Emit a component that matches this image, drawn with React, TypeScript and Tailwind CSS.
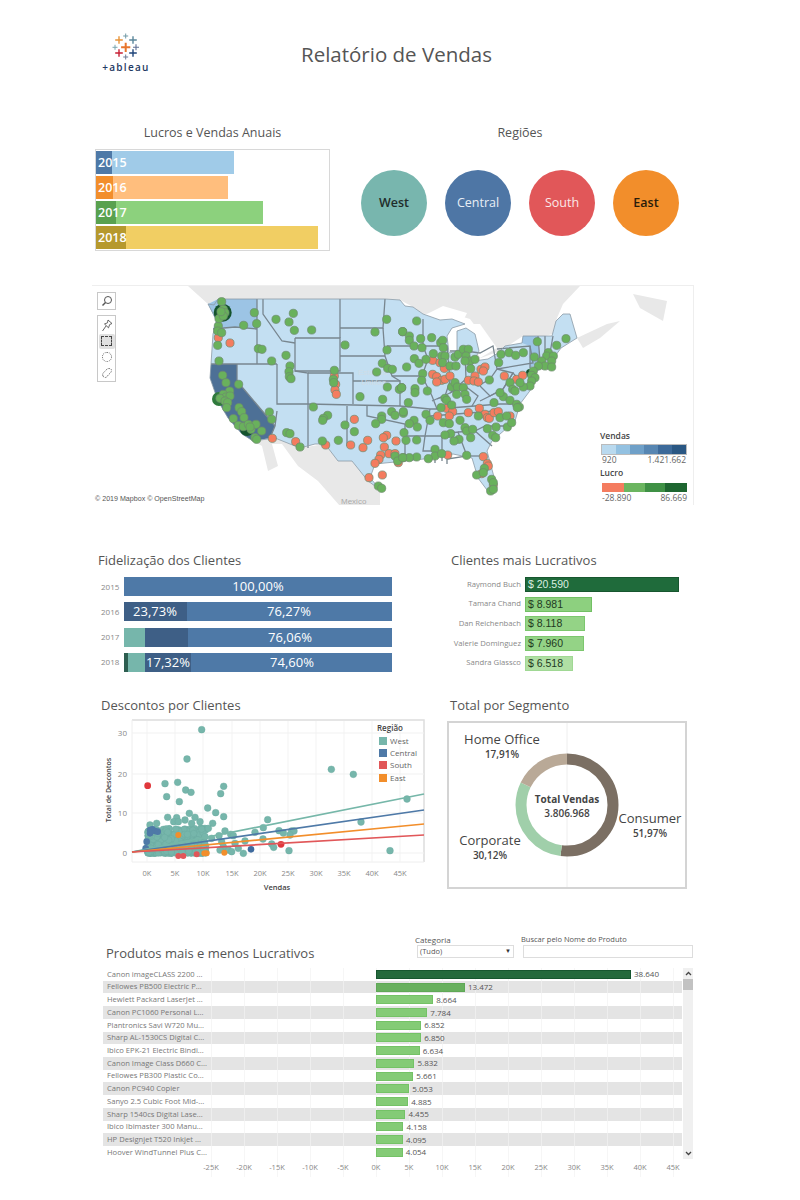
const years = [
  { y: "2015", w: 138, d: 16, bg: "bg-[#a0cbe8]", dark: "bg-[#4e79a7]" },
  { y: "2016", w: 132, d: 17, bg: "bg-[#ffbe7d]", dark: "bg-[#f28e2b]" },
  { y: "2017", w: 167, d: 20, bg: "bg-[#8cd17d]", dark: "bg-[#59a14f]" },
  { y: "2018", w: 222, d: 30, bg: "bg-[#f1ce63]", dark: "bg-[#b6992d]" },
];

const regions = [
  { name: "West", bg: "bg-[#78b6ae]", text: "font-semibold text-[#1f2d2b]" },
  { name: "Central", bg: "bg-[#4e76a5]", text: "font-medium text-[#e8eef5]" },
  { name: "South", bg: "bg-[#e15759]", text: "font-medium text-[#fbe9e9]" },
  { name: "East", bg: "bg-[#f28e2b]", text: "font-semibold text-[#2b1c0a]" },
];

const customers = [
  { name: "Raymond Buch", v: "$ 20.590", w: 154, bg: "bg-[#1f6b3b] border-[#17562f]", text: "text-[#dcefe0]" },
  { name: "Tamara Chand", v: "$ 8.981", w: 67, bg: "bg-[#8dd07f] border-[#72c064]", text: "text-[#1f3a1f]" },
  { name: "Dan Reichenbach", v: "$ 8.118", w: 60, bg: "bg-[#94d386] border-[#7cc76e]", text: "text-[#1f3a1f]" },
  { name: "Valerie Dominguez", v: "$ 7.960", w: 59, bg: "bg-[#94d386] border-[#7cc76e]", text: "text-[#1f3a1f]" },
  { name: "Sandra Glassco", v: "$ 6.518", w: 48, bg: "bg-[#b0dfa4] border-[#a0d894]", text: "text-[#1f3a1f]" },
];

const products = [
  ["Canon imageCLASS 2200 ...", 38640, "38.640"],
  ["Fellowes PB500 Electric P...", 13472, "13.472"],
  ["Hewlett Packard LaserJet ...", 8664, "8.664"],
  ["Canon PC1060 Personal L...", 7784, "7.784"],
  ["Plantronics Savi W720 Mu...", 6852, "6.852"],
  ["Sharp AL-1530CS Digital C...", 6850, "6.850"],
  ["Ibico EPK-21 Electric Bindi...", 6634, "6.634"],
  ["Canon Image Class D660 C...", 5832, "5.832"],
  ["Fellowes PB300 Plastic Co...", 5661, "5.661"],
  ["Canon PC940 Copier", 5053, "5.053"],
  ["Sanyo 2.5 Cubic Foot Mid-...", 4885, "4.885"],
  ["Sharp 1540cs Digital Lase...", 4455, "4.455"],
  ["Ibico Ibimaster 300 Manu...", 4158, "4.158"],
  ["HP Designjet T520 Inkjet ...", 4095, "4.095"],
  ["Hoover WindTunnel Plus C...", 4054, "4.054"],
] as [string, number, string][];

// dots read off the map, in 3x crop coordinates
const greenW = [[410,62],[508,95],[573,115],[625,97],[612,123],[628,148],[680,147],[476,133],[515,128],[400,135],[398,150],[410,155],[398,193],[520,203],[531,205],[603,223],[560,240],[402,240],[413,283],[423,305],[461,310],[615,255],[612,272],[613,287],[618,293],[780,192],[905,115],[870,153],[953,152],[906,207],[892,247],[875,273],[908,262],[922,265],[907,318],[943,325],[950,320],[825,347],[893,355],[748,268],[745,295],[746,305],[685,378],[728,403],[715,412],[713,418],[780,432],[808,452],[890,405],[890,415],[872,428],[920,392],[930,403],[955,397],[605,455],[615,458],[645,498],[712,480],[760,478],[930,525],[938,540],[955,530],[880,615],[890,622],[434,330],[415,340],[423,348],[435,345],[405,352],[420,360],[428,365],[425,380],[462,380],[470,392],[477,410],[445,413],[460,433],[475,437],[490,430],[498,445],[513,430],[530,450],[495,438],[510,470],[515,475],[553,393],[560,415],[415,85],[420,95],[402,113],[415,105],[408,92]];
const redW = [[400,170],[435,186],[748,285],[752,310],[750,327],[754,340],[808,415],[562,472],[632,482],[722,492],[797,492],[848,478],[834,500],[905,463],[895,470],[933,480],[898,498],[912,518],[887,522],[882,535],[870,547],[930,518],[940,545],[852,590],[892,582]];
const greenE = [[50,120],[8,152],[28,165],[28,178],[62,173],[42,195],[66,200],[95,170],[122,185],[128,178],[100,218],[130,200],[125,225],[135,225],[165,228],[175,220],[190,205],[205,205],[198,225],[210,240],[195,240],[225,235],[43,233],[57,247],[78,235],[20,258],[68,278],[65,298],[128,245],[150,255],[168,255],[212,263],[296,245],[303,220],[327,215],[347,223],[370,215],[412,182],[403,228],[470,193],[498,173],[445,215],[440,225],[460,225],[455,240],[425,240],[435,255],[415,255],[400,270],[455,258],[395,283],[405,290],[395,300],[390,315],[370,318],[360,305],[330,305],[338,325],[345,330],[310,347],[300,335],[330,358],[350,370],[358,378],[352,380],[268,297],[155,318],[165,305],[172,318],[190,320],[195,340],[170,340],[200,355],[135,352],[140,358],[123,380],[155,372],[45,323],[45,335],[82,330],[25,365],[5,320],[10,392],[78,400],[90,418],[42,418],[28,428],[52,438],[130,425],[148,428],[180,418],[195,440],[200,450],[218,445],[262,443],[288,438],[300,410],[320,405],[322,438],[335,425],[282,365],[235,405],[152,458],[135,462],[12,455],[18,478],[50,477],[177,475],[162,480],[212,470],[278,463],[287,470],[105,505],[105,525],[125,518],[85,533],[50,528],[28,530],[8,530],[200,523],[230,582],[253,562],[250,575],[275,595],[280,605],[272,630],[280,625]];
const redE = [[98,238],[120,245],[133,262],[98,280],[110,287],[125,298],[135,295],[110,303],[150,285],[205,298],[225,285],[222,300],[235,303],[243,265],[255,258],[250,270],[313,285],[350,295],[368,283],[140,382],[158,392],[148,405],[113,405],[205,395],[238,382],[255,400],[262,410],[268,412],[282,395],[295,392],[330,405],[143,522],[250,527],[262,548],[265,555],[245,578],[280,612]];

const usOutline = "208,303 214,304 218,298 257,298 340,298 385,298 400,299 405,305 413,306 423,313 440,319 452,318 465,323 452,327 447,335 449,352 457,350 457,330 466,327 475,333 479,350 474,360 488,358 498,352 505,345 522,342 523,335 538,335 552,335 556,320 563,313 570,313 577,337 561,347 553,358 553,367 540,368 530,375 532,387 520,403 515,420 492,440 487,450 497,487 490,493 478,477 472,457 453,453 433,457 405,460 375,463 370,477 382,490 368,480 352,460 338,460 325,443 315,443 300,447 275,437 253,440 242,433 228,417 218,400 210,377 211,363 213,333 217,320";
const stateLines = [
  "213,328 235,326 257,328", "257,298 257,363", "211,363 277,363", "263,298 263,313 282,340 295,342",
  "295,337 340,337 340,370 295,370 295,337", "277,363 277,403 308,403", "295,370 308,372 308,403", "308,372 353,372 353,403",
  "237,363 237,380 275,425", "277,410 275,425 270,437", "308,403 308,447", "308,403 400,405", "347,405 347,445",
  "340,298 340,337", "340,327 383,327 385,298", "340,355 385,355", "353,380 400,380 400,405", "383,327 385,355 392,375 400,380",
  "367,405 367,415 405,423 405,435 405,460", "387,345 423,345 428,358 422,375 392,375", "422,375 432,395 437,408 430,408 400,405",
  "430,408 425,435 405,435", "425,435 423,450 435,450 435,462", "425,435 442,435 442,460", "442,433 458,431 467,455 447,458 447,463",
  "458,431 475,430 492,445", "467,455 487,455", "475,430 485,425 505,425", "430,415 495,410", "437,408 500,403 520,403",
  "432,400 450,392 465,385 478,395 472,405", "423,345 423,318", "423,345 447,345 450,380 445,395 437,398", "450,350 465,350 466,378 450,392",
  "465,350 480,352 493,345 497,368 490,378 478,385 466,378", "497,348 530,345 533,362 497,368", "497,368 505,370 513,372 503,388 490,395 480,385",
  "480,400 490,395 503,388 513,372 525,385", "530,345 530,367", "538,335 540,360", "545,335 545,352 553,352", "553,335 550,352",
];

function Crosses() {
  const marks = [
    [125.7, 48.3, 4.6, 2, "#e8762c"], [119, 41, 3.8, 1.4, "#e8943a"], [133, 41, 3.8, 1.4, "#5b879b"], [125.7, 37, 2.5, 1, "#7199a6"],
    [115, 48.3, 2.5, 1, "#7ba6b0"], [136, 48.3, 3, 1.1, "#5f6f94"], [119, 54, 3.8, 1.4, "#c72035"], [133, 54, 3.8, 1.4, "#1f447a"], [125.7, 58, 2.5, 1, "#6e7b96"],
  ] as [number, number, number, number, string][];
  return (
    <svg width="44" height="30" viewBox="104 33 44 30">
      {marks.map(([x, y, r, t, c], i) => (
        <path key={i} d={`M${x - r} ${y}H${x + r}M${x} ${y - r}V${y + r}`} stroke={c} strokeWidth={t} />
      ))}
    </svg>
  );
}

function Toolbar() {
  return (
    <div className="absolute left-[5px] top-[6px] flex flex-col gap-[5px]">
      <div className="flex h-[18px] w-[19px] items-center justify-center border border-[#c8c8c8] bg-white">
        <svg width="12" height="12" viewBox="0 0 12 12" fill="none" stroke="#555" strokeWidth="1">
          <circle cx="7" cy="5" r="3.5" />
          <path d="M4.5 7.5L1.5 10.5" strokeWidth="1.5" />
        </svg>
      </div>
      <div className="flex h-[67px] w-[19px] flex-col items-center border border-[#c8c8c8] bg-white pt-[2px]">
        <div className="flex h-[16px] items-center">
          <svg width="12" height="13" viewBox="0 0 12 13" fill="none" stroke="#555" strokeWidth="0.9">
            <path d="M7 1L11 4.5L8.7 5.5L7.5 8.8L3.5 5L6.5 3.8Z M5 7L1.5 12" />
          </svg>
        </div>
        <div className="flex h-[16px] w-[16px] items-center justify-center rounded-[2px] bg-[#e0e0e0]">
          <div className="h-[10px] w-[11px] border border-dashed border-[#444]" />
        </div>
        <div className="flex h-[17px] items-center">
          <div className="h-[10px] w-[10px] rounded-full border border-dotted border-[#666]" />
        </div>
        <div className="flex h-[16px] items-center">
          <svg width="12" height="12" viewBox="0 0 12 12" fill="none" stroke="#666" strokeWidth="0.9" strokeDasharray="1.5 1">
            <path d="M2 9C0.5 6 4 5 5 3C6.5 1 10.5 0.8 10.5 3.5C10.5 6 7.5 7 6.5 9C5.5 11 3 11 2 9Z" />
          </svg>
        </div>
      </div>
    </div>
  );
}

function MapLegend() {
  const blues = ["bg-[#b9d9ee]", "bg-[#93c1e1]", "bg-[#6fa0c8]", "bg-[#5786b2]", "bg-[#3d6a9a]", "bg-[#2a5783]"];
  const greens = ["bg-[#f47c5f] w-[22px]", "bg-[#6bb560] w-[21px]", "bg-[#3f9145] w-[20px]", "bg-[#1e6630] w-[22px]"];
  return (
    <div className="absolute left-[507px] top-[144px] w-[88px] text-[8.5px] leading-[12px] text-[#666]">
      <div className="pl-[1px] font-semibold text-[#444]">Vendas</div>
      <div className="ml-[3px] mt-[3px] flex h-[9px] w-[84px] outline outline-1 outline-[#bbb]">
        {blues.map((c) => <div key={c} className={`flex-1 ${c}`} />)}
      </div>
      <div className="ml-[3px] flex w-[84px] justify-between"><span>920</span><span>1.421.662</span></div>
      <div className="mt-[1px] pl-[1px] font-semibold text-[#444]">Lucro</div>
      <div className="ml-[3px] mt-[4px] flex h-[9px] w-[85px]">
        {greens.map((c) => <div key={c} className={c} />)}
      </div>
      <div className="ml-[3px] flex w-[85px] justify-between"><span>-28.890</span><span>86.669</span></div>
    </div>
  );
}

function UsMap() {
  const dot = (p: number[], ox: number, oy: number, fill: string, k: string) => (
    <circle key={k} cx={ox + p[0] / 3} cy={oy + p[1] / 3} r={4.1} fill={fill} stroke="#6d8a6d" strokeWidth={0.7} />
  );
  return (
    <svg className="block" width="602" height="220" viewBox="92 285 602 220">
      <polygon points="188,285 580,285 563,303 557,317 553,333 540,336 523,335 500,350 478,358 479,330 470,318 450,312 423,313 413,306 400,299 385,298 218,298 208,303" fill="#e8e8e8" />
      <polygon points="577,337 607,323 620,320 600,337 583,347" fill="#e8e8e8" />
      <polygon points="633,293 667,300 663,320 640,307" fill="#e8e8e8" />
      <polygon points="253,440 275,437 300,447 325,443 352,460 370,480 380,490 380,505 340,505 318,480 298,465 282,443 272,443 278,465 268,470 262,445" fill="#e8e8e8" />
      <polygon points="427,313 443,305 467,312 463,320 440,315" fill="#fff" />
      <polygon points="467,323 480,323 497,347 480,357" fill="#fff" />
      <polygon points={usOutline} fill="#c3dff2" />
      <polygon points="208,303 218,298 257,298 257,328 235,326 213,328 216,320" fill="#9cc4e5" />
      <polygon points="211,363 237,363 237,380 275,425 270,437 253,440 242,433 228,417 218,400 210,377" fill="#4d7096" />
      <polygon points="522,342 523,335 538,335 540,360 530,367 530,345" fill="#9cc4e5" />
      {stateLines.map((s) => <polyline key={s} points={s} fill="none" stroke="#78868f" strokeWidth="1.3" />)}
      <polygon points={usOutline} fill="none" stroke="#8c9aa6" strokeWidth="0.8" />
      <text x="358" y="374" fontSize="8" fill="#cfdde6" fontFamily="Liberation Sans">Estados</text>
      <text x="361" y="384" fontSize="8" fill="#cfdde6" fontFamily="Liberation Sans">Unidos</text>
      <text x="341" y="503" fontSize="8" fill="#aaa" fontFamily="Liberation Sans">Mexico</text>
      <circle cx="222.7" cy="311.7" r="9" fill="#14532d" />
      <circle cx="219" cy="398" r="7" fill="#2f7a3c" />
      <circle cx="247" cy="428" r="7" fill="#14532d" />
      <circle cx="530" cy="372" r="4" fill="#14532d" />
      {redW.map((p, i) => dot(p, 85, 280, "#f47c5f", "rw" + i))}
      {redE.map((p, i) => dot(p, 400, 280, "#f47c5f", "re" + i))}
      {greenW.map((p, i) => dot(p, 85, 280, "#69b15c", "gw" + i))}
      {greenE.map((p, i) => dot(p, 400, 280, "#69b15c", "ge" + i))}
    </svg>
  );
}

function Loyalty() {
  const rows = [
    { y: "2015", segs: [], text: [["100,00%", 134]] },
    { y: "2016", segs: [["bg-[#3e5f86]", 0, 63]], text: [["23,73%", 31], ["76,27%", 165]] },
    { y: "2017", segs: [["bg-[#76b6ab]", 0, 21], ["bg-[#3e5f86]", 21, 43]], text: [["76,06%", 166]] },
    { y: "2018", segs: [["bg-[#2d5e50]", 0, 4], ["bg-[#76b6ab]", 4, 17], ["bg-[#3e5f86]", 21, 46]], text: [["17,32%", 44], ["74,60%", 168]] },
  ] as { y: string; segs: [string, number, number][]; text: [string, number][] }[];
  return (
    <div className="flex flex-col gap-[6.3px]">
      {rows.map((r) => (
        <div key={r.y} className="flex h-[19px] items-center">
          <div className="w-[26px] pl-[3px] text-[8px] text-[#888]">{r.y}</div>
          <div className="relative flex h-[19px] w-[268px] bg-[#4e79a7] text-[13px] font-medium text-white">
            {r.segs.map(([c, , w]) => <div key={c} style={{ width: w }} className={c} />)}
            {r.text.map(([t, x]) => (
              <span key={t} style={{ left: x }} className="absolute top-0 -translate-x-1/2 leading-[19px]">{t}</span>
            ))}
          </div>
        </div>
      ))}
    </div>
  );
}

function Customers() {
  return (
    <div className="relative flex flex-col gap-[4.7px]">
      {customers.map((c) => (
        <div key={c.name} className="flex h-[15px] items-center">
          <div className="w-[71px] whitespace-nowrap text-right text-[7.7px] text-[#888]">{c.name}</div>
          <div style={{ width: c.w }} className={`ml-[4px] h-[15px] border pl-[2px] font-['Liberation_Sans',sans-serif] text-[10.5px] leading-[13px] ${c.bg} ${c.text}`}>{c.v}</div>
        </div>
      ))}
    </div>
  );
}

// seeded so the blob of small-order dots stays the same between runs
function blob() {
  let s = 7;
  const rnd = () => { s = (s * 16807) % 2147483647; return s / 2147483647; };
  const out: [number, number][] = [];
  for (let i = 0; i < 600; i++) {
    const a = rnd(), b = rnd();
    out.push([148 + Math.pow(a, 1.3) * 58, 853 - b * b * 25]);
  }
  return out;
}

function Scatter() {
  const teal = [[320,104],[276,192],[210,266],[248,262],[215,305],[272,285],[288,292],[253,320],[386,274],[377,296],[338,339],[362,353],[386,365],[353,385],[340,400],[390,408],[372,422],[407,418],[415,422],[480,412],[505,398],[518,374],[552,407],[565,414],[590,408],[597,408],[585,420],[504,432],[530,447],[536,457],[582,467],[445,475],[420,445],[430,460],[450,438],[709,223],[775,238],[936,312],[798,381],[885,467],[218,367],[283,355],[300,367],[315,380],[245,368],[236,380],[165,390],[185,385],[160,415],[250,380],[270,375],[290,385],[330,425],[350,430],[380,440],[400,465],[385,455],[375,465],[410,470]];
  const px = (p: number[]) => ({ cx: 95 + p[0] / 3, cy: 695 + p[1] / 3 });
  const xt = ["0K", "5K", "10K", "15K", "20K", "25K", "30K", "35K", "40K", "45K"];
  const xs = [147, 175, 203, 232, 260, 288, 316, 344, 372, 400];
  const ys = [[30, 733], [20, 774], [10, 813], [0, 853]];
  const lines = [["#76b7a9", 794], ["#4e79a7", 810], ["#f28e2b", 824], ["#e15759", 835]] as [string, number][];
  const legend = [["West", "#76b6ab", 741], ["Central", "#4e79a7", 753], ["South", "#e15759", 765], ["East", "#f28e2b", 778]] as [string, string, number][];
  return (
    <svg className="block" width="335" height="180" viewBox="95 715 335 180" fontFamily="Open Sans" fontSize="7.5">
      <path d="M132 720H424V862" fill="none" stroke="#ddd" strokeWidth="1.5" />
      <path d="M132 720V862H424" fill="none" stroke="#eee" />
      {xs.map((x) => <line key={x} x1={x} x2={x} y1={721} y2={862} stroke="#f3f3f3" />)}
      {ys.map(([, y]) => <line key={y} x1={132} x2={424} y1={y} y2={y} stroke="#f1f1f1" />)}
      {xt.map((t, i) => <text key={t} x={xs[i]} y={876} textAnchor="middle" fill="#888">{t}</text>)}
      {ys.map(([v, y]) => <text key={v} x={127} y={y + 3} textAnchor="end" fill="#888" fontSize="8">{v}</text>)}
      <text x="277" y="890" textAnchor="middle" fill="#444" fontWeight="600">Vendas</text>
      <text x="0" y="0" transform="translate(111 790) rotate(-90)" textAnchor="middle" fill="#444" fontWeight="600" fontSize="7">Total de Descontos</text>
      {blob().map(([x, y], i) => <circle key={i} cx={x} cy={y} r={3.3} fill="#76b6ab" stroke="#6aa89f" strokeWidth={0.4} />)}
      {teal.map((p, i) => <circle key={i} {...px(p)} r={3.4} fill="#76b6ab" stroke="#6aa89f" strokeWidth={0.4} />)}
      {[[165,405],[172,403],[180,408],[188,410],[165,415],[155,440],[152,460]].map((p, i) => <circle key={i} {...px(p)} r={3.3} fill="#4e79a7" />)}
      {[[250,420],[335,475],[328,475],[388,473]].map((p, i) => <circle key={i} {...px(p)} r={3} fill="#f28e2b" />)}
      {[[305,478],[250,483],[265,483]].map((p, i) => <circle key={i} {...px(p)} r={3} fill="#e15759" />)}
      <circle {...px([468, 463])} r={3.3} fill="#3f6b9e" />
      <circle {...px([158, 272])} r={3.4} fill="#e0383c" />
      <circle {...px([558, 448])} r={3.4} fill="#e0383c" />
      {lines.map(([c, y]) => <line key={c} x1={132} y1={852} x2={424} y2={y} stroke={c} strokeWidth={1.7} />)}
      <text x="377" y="731" fill="#444" fontWeight="600" fontSize="8">Região</text>
      {legend.map(([t, c, y]) => (
        <g key={t}>
          <rect x={379} y={y - 4} width={8} height={8} fill={c} />
          <text x={390} y={y + 3} fill="#666" fontSize="8">{t}</text>
        </g>
      ))}
    </svg>
  );
}

function Donut() {
  const C = 2 * Math.PI * 46;
  const segs = [[0.5197, 0, "#7b6f63"], [0.3012, 0.5197, "#a0cfaa"], [0.1791, 0.8209, "#b9a997"]] as [number, number, string][];
  return (
    <div className="relative h-[168px] w-[240px] border-2 border-[#d4d4d4] text-[#444]">
      <svg className="absolute inset-0" width="236" height="164" viewBox="449 723 236 164">
        <line x1="567" x2="567" y1="723" y2="887" stroke="#eee" />
        {segs.map(([v, o, c]) => (
          <circle key={c} cx="567" cy="805" r="46" fill="none" stroke={c} strokeWidth="11"
            strokeDasharray={`${v * C} ${C}`} strokeDashoffset={-o * C} transform="rotate(-90 567 805)" />
        ))}
      </svg>
      <Lbl x={53} y={8} a="Home Office" b="17,91%" />
      <Lbl x={201} y={87} a="Consumer" b="51,97%" />
      <Lbl x={41} y={109} a="Corporate" b="30,12%" />
      <div className="absolute left-[118px] top-[69px] -translate-x-1/2 whitespace-nowrap text-center text-[10px] leading-[14px]">
        <div className="font-bold">Total Vendas</div>
        <div className="font-semibold">3.806.968</div>
      </div>
    </div>
  );
}

function Lbl({ x, y, a, b }: { x: number; y: number; a: string; b: string }) {
  return (
    <div style={{ left: x, top: y }} className="absolute -translate-x-1/2 whitespace-nowrap text-center">
      <div className="text-[13px] leading-[16px]">{a}</div>
      <div className="text-[10px] font-semibold leading-[15px]">{b}</div>
    </div>
  );
}

function Products() {
  const ticks = [-25, -20, -15, -10, -5, 0, 5, 10, 15, 20, 25, 30, 35, 40, 45];
  return (
    <div className="ml-[103px] flex w-[590px]">
      <div className="relative w-[579px]">
        {products.map(([name, v, label], i) => (
          <div key={name} className={`flex h-[12.73px] items-center ${i % 2 ? "bg-[#e4e4e4]" : ""}`}>
            <div className="w-[273px] pl-[4px] text-[7.6px] text-[#777]">{name}</div>
            <div style={{ width: (v * 6.6) / 1000 }} className={`relative z-10 h-[9px] border ${i === 0 ? "border-[#17562f] bg-[#24693c]" : i === 1 ? "border-[#5fa856] bg-[#68b05e]" : "border-[#74c266] bg-[#84cb76]"}`} />
            <div className="relative z-10 ml-[3px] text-[8px] text-[#555]">{label}</div>
          </div>
        ))}
        <div className="absolute inset-0">
          {ticks.map((t) => (
            <div key={t} style={{ left: 273 + t * 6.6 }} className="absolute bottom-0 top-0 w-px bg-[#f2f2f2]/70" />
          ))}
        </div>
        <div className="relative h-[18px]">
          {ticks.map((t) => (
            <span key={t} style={{ left: 273 + t * 6.6 }} className="absolute top-[3px] -translate-x-1/2 text-[7.5px] text-[#888]">{t}K</span>
          ))}
        </div>
      </div>
      <div className="ml-[1px] flex h-[191px] w-[10px] flex-col items-center bg-[#f0f0f0]">
        <svg className="my-[3px]" width="7" height="5" viewBox="0 0 7 5"><path d="M1 4L3.5 1.5L6 4" fill="none" stroke="#444" strokeWidth="1.3" /></svg>
        <div className="h-[11px] w-full bg-[#c2c2c2]" />
        <svg className="mb-[3px] mt-auto" width="7" height="5" viewBox="0 0 7 5"><path d="M1 1L3.5 3.5L6 1" fill="none" stroke="#444" strokeWidth="1.3" /></svg>
      </div>
    </div>
  );
}

export default function App() {
  return (
    <div className="h-[1200px] w-[800px] bg-white font-['Open_Sans',sans-serif] text-[#555]">
      <header className="flex h-[125px] items-start pl-[100px] pt-[32px]">
        <div className="flex w-[52px] flex-col items-center">
          <Crosses />
          <div className="-mt-[1px] text-[10px] font-semibold leading-[12px] tracking-[1.3px] text-[#1f3a63]">+ableau</div>
        </div>
        <h1 className="ml-[149px] mt-[6px] text-[20.5px] font-normal leading-[32px]">Relatório de Vendas</h1>
      </header>

      <section className="flex h-[130px]">
        <div className="ml-[95px] w-[235px]">
          <h2 className="text-center text-[12.5px] leading-[16px]">Lucros e Vendas Anuais</h2>
          <div className="mt-[8px] flex h-[102px] flex-col gap-[2px] border border-[#d8d8d8] bg-white py-[1px]">
            {years.map((b) => (
              <div key={b.y} style={{ width: b.w }} className={`relative h-[23px] ${b.bg}`}>
                <div style={{ width: b.d }} className={`h-full ${b.dark}`} />
                <span className="absolute left-[2px] top-0 text-[12.5px] font-semibold leading-[23px] text-white">{b.y}</span>
              </div>
            ))}
          </div>
        </div>
        <div className="ml-[31px] w-[318px]">
          <h2 className="text-center text-[12.5px] leading-[16px]">Regiões</h2>
          <div className="mt-[29px] flex gap-[18px]">
            {regions.map((r) => (
              <div key={r.name} className={`flex h-[66px] w-[66px] items-center justify-center rounded-full text-[12.5px] ${r.bg} ${r.text}`}>{r.name}</div>
            ))}
          </div>
        </div>
      </section>

      <section className="relative ml-[92px] mt-[30px] h-[220px] w-[602px] overflow-hidden border-r border-t border-[#eee]">
        <UsMap />
        <Toolbar />
        <MapLegend />
        <div className="absolute bottom-[0px] left-[3px] font-['Liberation_Sans',sans-serif] text-[7.1px] text-[#555]">© 2019 Mapbox © OpenStreetMap</div>
      </section>

      <section className="mt-[47px] flex h-[145px]">
        <div className="ml-[98px] w-[294px]">
          <h2 className="text-[13px] leading-[16px]">Fidelização dos Clientes</h2>
          <div className="mt-[9px]"><Loyalty /></div>
        </div>
        <div className="ml-[59px] w-[240px]">
          <h2 className="text-[13px] leading-[16px]">Clientes mais Lucrativos</h2>
          <div className="mt-[9px] -ml-[1px]"><Customers /></div>
        </div>
      </section>

      <section className="flex h-[237px]">
        <div className="ml-[95px] w-[335px]">
          <h2 className="ml-[6px] h-[18px] text-[13px] leading-[16px]">Descontos por Clientes</h2>
          <Scatter />
        </div>
        <div className="ml-[17px] w-[240px]">
          <h2 className="ml-[3px] h-[24px] text-[13px] leading-[16px]">Total por Segmento</h2>
          <Donut />
        </div>
      </section>

      <section>
        <div className="flex h-[28px] items-start">
          <h2 className="ml-[106px] mt-[11px] w-[309px] text-[13px] leading-[16px]">Produtos mais e menos Lucrativos</h2>
          <div className="w-[106px] text-[8px]">
            <div className="leading-[11px]">Categoria</div>
            <div className="ml-[2px] flex h-[13px] w-[97px] items-center justify-between border border-[#ddd] px-[2px] text-[7.5px]"><span>(Tudo)</span><span className="text-[6px] text-[#333]">▼</span></div>
          </div>
          <div className="text-[7.5px]">
            <div className="leading-[11px]">Buscar pelo Nome do Produto</div>
            <div className="ml-[2px] h-[13px] w-[170px] border border-[#ddd]" />
          </div>
        </div>
        <div className="mt-[6px]"><Products /></div>
      </section>
    </div>
  );
}
